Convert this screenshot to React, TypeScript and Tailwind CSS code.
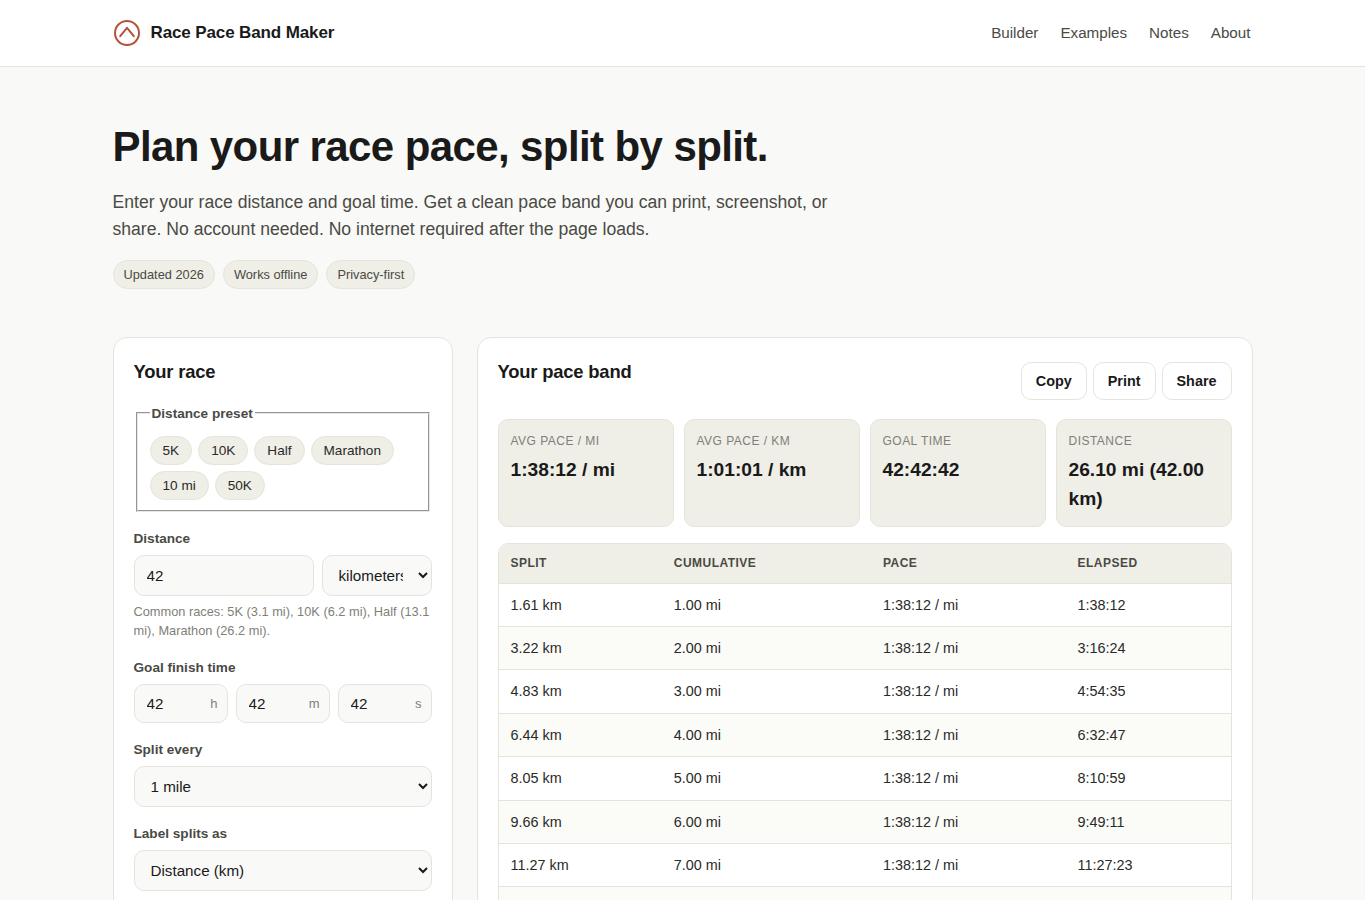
const navLinks = ['Builder', 'Examples', 'Notes', 'About'];
const tags = ['Updated 2026', 'Works offline', 'Privacy-first'];
const presets = ['5K', '10K', 'Half', 'Marathon', '10 mi', '50K'];

const stats = [
  { label: 'Avg pace / mi', value: '1:38:12 / mi' },
  { label: 'Avg pace / km', value: '1:01:01 / km' },
  { label: 'Goal time', value: '42:42:42' },
  { label: 'Distance', value: '26.10 mi (42.00 km)' },
];

const rows = [
  ['1.61 km', '1.00 mi', '1:38:12 / mi', '1:38:12'],
  ['3.22 km', '2.00 mi', '1:38:12 / mi', '3:16:24'],
  ['4.83 km', '3.00 mi', '1:38:12 / mi', '4:54:35'],
  ['6.44 km', '4.00 mi', '1:38:12 / mi', '6:32:47'],
  ['8.05 km', '5.00 mi', '1:38:12 / mi', '8:10:59'],
  ['9.66 km', '6.00 mi', '1:38:12 / mi', '9:49:11'],
  ['11.27 km', '7.00 mi', '1:38:12 / mi', '11:27:23'],
  ['12.87 km', '8.00 mi', '1:38:12 / mi', '13:05:34'],
];

function FieldLabel({ children }: { children: string }) {
  return <label className="block text-[13.6px] leading-[17px] font-bold text-[#4a4a45] mb-[8px]">{children}</label>;
}

function TimeInput({ value, unit }: { value: string; unit: string }) {
  return (
    <div className="relative flex-1 min-w-0">
      <input
        defaultValue={value}
        className="w-full h-[39px] pl-[12px] pr-[28px] text-[15.2px] text-[#1a1a1a] bg-[#f9f9f7] border border-[#e5e4dc] rounded-[10px]"
      />
      <span className="absolute right-[10px] top-[11px] text-[13px] leading-[17px] text-[#807f78]">{unit}</span>
    </div>
  );
}

function NativeSelect({ children }: { children: string }) {
  return (
    <select className="block w-full h-[41px] px-[12px] text-[15.2px] text-[#1a1a1a] bg-[#f9f9f7] border border-[#e5e4dc] rounded-[10px]">
      <option>{children}</option>
    </select>
  );
}

export default function App() {
  return (
    <div className="h-[900px] overflow-hidden bg-[#f9f9f7] text-[#1a1a1a] font-['Liberation_Sans',Arial,sans-serif]">
      <header className="h-[67px] bg-white border-b border-[#e5e4dc]">
        <div className="w-[1140px] mx-auto h-full flex items-center justify-between pr-[2px]">
          <div className="flex items-center gap-[10px]">
            <svg width="28" height="28" viewBox="0 0 28 28" fill="none" stroke="#b5523b" strokeWidth="2">
              <circle cx="14" cy="14" r="12" />
              <path d="M7.2 17.2 L14 8.8 L20.8 17.2" strokeLinecap="round" strokeLinejoin="round" />
            </svg>
            <span className="text-[17px] font-bold tracking-[-0.12px]">Race Pace Band Maker</span>
          </div>
          <nav className="flex items-center gap-[22px]">
            {navLinks.map((link) => (
              <a key={link} className="text-[15.2px] text-[#4a4a45]">{link}</a>
            ))}
          </nav>
        </div>
      </header>

      <main className="w-[1140px] mx-auto">
        <section className="pt-[56px] pb-[48px]">
          <h1 className="text-[42px] leading-[48px] font-bold tracking-[-0.6px] mb-[18px]">Plan your race pace, split by split.</h1>
          <p className="w-[720px] text-[17.6px] leading-[27px] text-[#4a4a45]">
            Enter your race distance and goal time. Get a clean pace band you can print, screenshot, or share. No account needed. No internet required after the page loads.
          </p>
          <div className="flex gap-[8px] mt-[17px]">
            {tags.map((tag) => (
              <span key={tag} className="h-[29px] px-[10px] flex items-center text-[12.8px] text-[#4a4a45] bg-[#efeee7] border border-[#e5e4dc] rounded-full">{tag}</span>
            ))}
          </div>
        </section>

        <div className="grid grid-cols-[340px_1fr] gap-[24px] items-start">
          <section className="bg-white border border-[#e5e4dc] rounded-[14px] p-[20px]">
            <h2 className="text-[18.4px] leading-[28px] tracking-[-0.184px] font-bold mb-[16px]">Your race</h2>

            <fieldset className="mx-[2px] mb-[18px] px-[12px] pb-[10px] pt-[12px] border-2 [border-style:groove] border-[#e8e8e8]">
              <legend className="px-[2px] pt-[2px] text-[13.6px] font-bold text-[#4a4a45]">Distance preset</legend>
              <div className="flex flex-wrap gap-[6px]">
                {presets.map((preset) => (
                  <button key={preset} className="h-[29px] px-[12px] text-[13.6px] text-[#2a2a27] bg-[#efeee7] border border-[#e5e4dc] rounded-full">{preset}</button>
                ))}
              </div>
            </fieldset>

            <div className="mb-[19px]">
              <FieldLabel>Distance</FieldLabel>
              <div className="flex gap-[8px]">
                <input
                  defaultValue="42"
                  className="flex-1 min-w-0 h-[41px] px-[12px] text-[15.2px] bg-[#f9f9f7] border border-[#e5e4dc] rounded-[10px]"
                />
                <select className="w-[110px] h-[41px] px-[12px] text-[15.2px] bg-[#f9f9f7] border border-[#e5e4dc] rounded-[10px]">
                  <option>kilometers</option>
                </select>
              </div>
              <p className="mt-[6px] text-[12.8px] leading-[19px] text-[#807f78]">Common races: 5K (3.1 mi), 10K (6.2 mi), Half (13.1 mi), Marathon (26.2 mi).</p>
            </div>

            <div className="mb-[18px]">
              <FieldLabel>Goal finish time</FieldLabel>
              <div className="flex gap-[8px]">
                <TimeInput value="42" unit="h" />
                <TimeInput value="42" unit="m" />
                <TimeInput value="42" unit="s" />
              </div>
            </div>

            <div className="mb-[18px]">
              <FieldLabel>Split every</FieldLabel>
              <NativeSelect>1 mile</NativeSelect>
            </div>

            <div className="mb-[18px]">
              <FieldLabel>Label splits as</FieldLabel>
              <NativeSelect>Distance (km)</NativeSelect>
            </div>
          </section>

          <section className="bg-white border border-[#e5e4dc] rounded-[14px] p-[20px]">
            <div className="flex justify-between items-start mb-[19px]">
              <h2 className="text-[18.4px] leading-[28px] tracking-[-0.184px] font-bold">Your pace band</h2>
              <div className="flex gap-[6px] mt-[4px]">
                {['Copy', 'Print', 'Share'].map((label) => (
                  <button key={label} className="h-[38px] px-[14px] pt-[1px] text-[14.4px] font-bold bg-white border border-[#e5e4dc] rounded-[10px]">{label}</button>
                ))}
              </div>
            </div>

            <div className="grid grid-cols-4 gap-[10px] mb-[16px]">
              {stats.map((stat) => (
                <div key={stat.label} className="bg-[#efeee7] border border-[#e5e4dc] rounded-[10px] px-[12px] pt-[12px] pb-[13px]">
                  <div className="text-[12px] leading-[18px] uppercase tracking-[0.48px] text-[#807f78] mb-[5px]">{stat.label}</div>
                  <div className="text-[19.2px] leading-[29px] font-bold">{stat.value}</div>
                </div>
              ))}
            </div>

            <div className="border border-[#e5e4dc] rounded-[10px] overflow-hidden">
              <table className="w-full border-collapse text-[14.4px]">
                <thead>
                  <tr className="bg-[#efeee7]">
                    {['Split', 'Cumulative', 'Pace', 'Elapsed'].map((head) => (
                      <th key={head} className="text-left px-[12px] py-[10.3px] text-[12px] leading-[18px] font-bold uppercase tracking-[0.48px] text-[#4a4a45] border-b border-[#e5e4dc]">{head}</th>
                    ))}
                  </tr>
                </thead>
                <tbody>
                  {rows.map((row, i) => (
                    <tr key={row[0]} className={i % 2 === 1 ? 'bg-[#fbfbf7]' : 'bg-white'}>
                      {row.map((cell) => (
                        <td key={cell} className="px-[12px] pt-[11px] pb-[9.8px] leading-[21.6px] text-[#2a2a27] border-b border-[#e5e4dc]">{cell}</td>
                      ))}
                    </tr>
                  ))}
                </tbody>
              </table>
            </div>
          </section>
        </div>
      </main>
    </div>
  );
}
